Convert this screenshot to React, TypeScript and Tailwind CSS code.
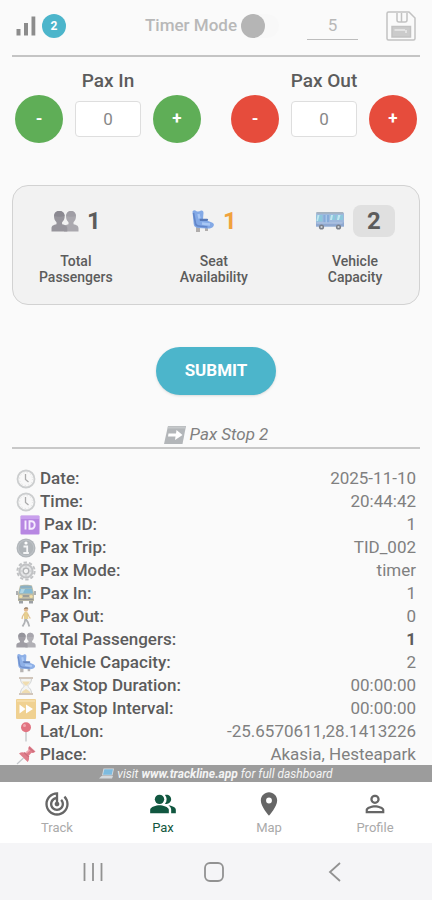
import { useState, type ReactNode } from 'react';
import { MdTrackChanges, MdPeopleAlt, MdLocationOn, MdPersonOutline } from 'react-icons/md';

interface IconProps {
  className?: string;
}

interface DetailRow {
  icon: (props: IconProps) => ReactNode;
  label: string;
  value: string;
  indent?: boolean;
  strong?: boolean;
}

function PeopleIcon({ className }: IconProps) {
  return (
    <svg viewBox="0 0 28 22" className={className}>
      <path d="M13 21.500v-4c0-2 2-2.700 4.500-3.200v-2c-1.500-1.500-2.500-3.500-2.500-6 0-3.500 2-5.300 5-5.300s5 1.800 5 5.300c0 2.500-1 4.500-2.500 6v2c3 .7 5 1.400 5 4.200v3z" fill="#aaa8ae" />
      <path d="M.5 21.500v-3c0-2.800 2-3.500 5-4.200v-2C4 10.800 3 8.800 3 6.300 3 2.800 5 1 8.300 1s5.400 1.800 5.400 5.300c0 2.500-1 4.500-2.600 6v2c3 .7 5.200 1.400 5.200 4.200v3z" fill="#97959c" />
      <path d="M3.200 6c.3-3 2-5 5.100-5s5 2 5.300 5c-2.500 1-8 1-10.400 0z" fill="#8b8991" />
      <path d="M15.200 6c.3-3 2-5 4.800-5s4.600 2 4.900 5c-2.300 1-7.500 1-9.700 0z" fill="#a09ea5" />
    </svg>
  );
}

function SeatIcon({ className }: IconProps) {
  return (
    <svg viewBox="0 0 24 24" className={className}>
      <path d="M5 18h4v5H5zM14 19h3v3h-3z" fill="#b0adac" />
      <path d="M1.500 2.500C2.500 1 4 1 5.500 2.200 7 3 8.500 2.500 10 1.500c1.700-.3 2.600.7 2.500 2.500L12 10l9 3.500c2 .8 2.500 2.500 1.300 4-1.500 1.700-3.500 2.300-6 2L7 19c-2.500-.3-4-1.500-4.300-4z" fill="#83a9e6" />
      <path d="M2.500 4l2 10.500c.3 1.500 1.300 2.300 3 2.500l9 1" fill="none" stroke="#6286c9" strokeWidth="1.600" />
      <path d="M8.500 9.800h7.500c1.500 0 1.500 2.200 0 2.200H9z" fill="#587ab8" />
      <path d="M7.500 5l1 4.500M11 14.500l8 1" stroke="#a9c8f5" strokeWidth="2.400" />
    </svg>
  );
}

function BusIcon({ className }: IconProps) {
  return (
    <svg viewBox="0 0 30 20" className={className}>
      <path d="M2 1.500h25.500c1 0 1.500.6 1.500 1.500v12.500H1V5c0-2 .3-3.500 1-3.500z" fill="#9db8dc" />
      <path d="M1.500 1h26.500l.7 1.800H1.200z" fill="#a5b2bf" />
      <path d="M1.500 4h6v6.500h-6zM15 4h5v5h-5zM21 4h7v5h-7z" fill="#8cc8dc" />
      <path d="M2.500 4h2l-1.500 6H1.500zM16 4h2l-1 5h-2zM23 4h2.500L24 9h-2z" fill="#c2e6f0" />
      <path d="M8.500 4h5.500v11H8.500z" fill="#86abd9" />
      <path d="M11.200 4v11" stroke="#b9d2ef" />
      <path d="M1 11.500h28v4H1z" fill="#8fa8d0" />
      <path d="M1.500 12h26" stroke="#bccde8" />
      <circle cx="6.500" cy="16" r="2.600" fill="#7b8089" />
      <circle cx="23.500" cy="16" r="2.600" fill="#7b8089" />
      <circle cx="6.500" cy="16" r="1.100" fill="#d0d3d8" />
      <circle cx="23.500" cy="16" r="1.100" fill="#d0d3d8" />
    </svg>
  );
}

function ClockIcon({ className }: IconProps) {
  return (
    <svg viewBox="0 0 20 20" className={className}>
      <circle cx="10" cy="10" r="8.500" fill="#f8f8f8" stroke="#c8cacb" strokeWidth="1.800" />
      <circle cx="10" cy="10" r="6.500" fill="none" stroke="#dedede" strokeDasharray="1 2.400" />
      <path d="M9.500 5v5.500l3 2.500" fill="none" stroke="#a3a3a3" strokeWidth="1.300" />
    </svg>
  );
}

function IdIcon({ className }: IconProps) {
  return (
    <svg viewBox="0 0 20 20" className={className}>
      <rect x=".5" y=".5" width="19" height="19" rx="1" fill="#b07be0" />
      <path d="M1 1h18v3H1z" fill="#c497ec" />
      <path d="M5.500 5.500v9M9.500 6.200h1.800c4.500 0 4.500 7.600 0 7.600H9.500z" fill="none" stroke="#f5ebff" strokeWidth="1.900" />
    </svg>
  );
}

function InfoIcon({ className }: IconProps) {
  return (
    <svg viewBox="0 0 20 20" className={className}>
      <circle cx="10" cy="10" r="9.500" fill="#a9aeb3" />
      <circle cx="10" cy="10" r="7.800" fill="none" stroke="#b9bec3" />
      <circle cx="10" cy="5" r="1.600" fill="#fff" />
      <path d="M7.500 8.500h3.700v6.200M7.300 15h5.600" fill="none" stroke="#f4f5f6" strokeWidth="1.800" />
    </svg>
  );
}

function GearIcon({ className }: IconProps) {
  return (
    <svg viewBox="0 0 20 20" className={className}>
      <circle cx="10" cy="10" r="8.600" fill="none" stroke="#bbbdbf" strokeWidth="2" strokeDasharray="3.400 2" />
      <circle cx="10" cy="10" r="6.600" fill="#e2e3e4" stroke="#bbbdbf" strokeWidth="2" />
      <circle cx="10" cy="10" r="2.800" fill="#f4f4f4" stroke="#abadaf" strokeWidth="1.300" />
      <path d="M10 4v3M10 13v3M4 10h3M13 10h3" stroke="#c2c4c6" />
    </svg>
  );
}

function BusFrontIcon({ className }: IconProps) {
  return (
    <svg viewBox="0 0 20 20" className={className}>
      <path d="M3 16h4v3.500H3zM13 16h4v3.500h-4z" fill="#94989c" />
      <path d="M0 7h2v4H0zM18 7h2v4h-2z" fill="#a5a9ac" />
      <path d="M4 1.500C6 .5 14 .5 16 1.500L18 9v8H2V9z" fill="#bbb79e" />
      <path d="M4.500 2c2-.8 9-.8 11 0l.5 2H4z" fill="#7fa9bf" />
      <path d="M4 4.500h12l1 5H3z" fill="#79b4d0" />
      <path d="M5 5h4l-2 4H4z" fill="#a9d3e4" />
      <circle cx="4.800" cy="12.500" r="1.500" fill="#f3dc9b" />
      <circle cx="15.200" cy="12.500" r="1.500" fill="#f3dc9b" />
      <path d="M7 12h6M2.500 15.500h15" stroke="#888b8a" strokeWidth="1.300" />
    </svg>
  );
}

function WalkIcon({ className }: IconProps) {
  return (
    <svg viewBox="0 0 20 20" className={className}>
      <circle cx="10" cy="2.600" r="2.200" fill="#dfb184" />
      <path d="M8 2c0-2 4-2.500 4.300-.3z" fill="#8d7762" />
      <path d="M9.500 11.500l2.500 4 1.300 4M9.500 11.500L8.500 16l-2 3.500" fill="none" stroke="#a8abae" strokeWidth="1.800" />
      <path d="M8 5.500c1-1 3-1 3.800 0l.5 6.500H8z" fill="#e6cb83" />
      <path d="M8.300 6.500L6.500 9.500 6 12M11.500 6.500l1.500 3 1.300 2" fill="none" stroke="#dcb984" strokeWidth="1.300" />
    </svg>
  );
}

function HourglassIcon({ className }: IconProps) {
  return (
    <svg viewBox="0 0 20 20" className={className}>
      <path d="M4.500 2.500c0 4 1.500 5 4 7.500-2.500 2.500-4 3.500-4 7.500h11c0-4-1.500-5-4-7.500 2.500-2.500 4-3.500 4-7.500z" fill="#f3f4f3" stroke="#cdcfcf" />
      <path d="M6 5.500h8c-.8 2-2.500 3-4 4.500-1.500-1.500-3.200-2.500-4-4.500zM5.500 17c.5-2 2.500-2.500 4.500-4 2 1.500 4 2 4.500 4z" fill="#eed9a8" />
      <path d="M3 1h14v2H3zM3 17h14v2H3z" fill="#cdc1b5" />
    </svg>
  );
}

function ForwardIcon({ className }: IconProps) {
  return (
    <svg viewBox="0 0 20 20" className={className}>
      <rect width="20" height="20" rx="1" fill="#efcd86" />
      <path d="M1 1h18v2H1z" fill="#f5d99f" />
      <path d="M3.500 5.500l6 4.500-6 4.500zM10 5.500l7 4.500-7 4.500z" fill="#fff" />
    </svg>
  );
}

function RoundPinIcon({ className }: IconProps) {
  return (
    <svg viewBox="0 0 20 20" className={className}>
      <path d="M10 9v10.500" stroke="#c3c6c9" strokeWidth="1.500" />
      <circle cx="10" cy="5.200" r="5" fill="#df6574" />
      <circle cx="8.500" cy="3.500" r="1.500" fill="#f0a0a9" />
    </svg>
  );
}

function PushPinIcon({ className }: IconProps) {
  return (
    <svg viewBox="0 0 20 20" className={className}>
      <path d="M7.500 13L1 19" stroke="#c0c4c8" strokeWidth="1.300" />
      <path d="M3 8.500c2-1.500 4-1.500 6-.5l3.500-3c-.5-1.500 0-3 1-4l6 5.500c-1 1.200-2.500 1.700-4 1.200L12.500 11c1 2 .8 4-.8 6z" fill="#dd7180" />
      <path d="M8 7.500l5 4.500M13 2.500l5 4.500" stroke="#c9606f" strokeWidth="1.200" />
      <path d="M10 8l3.500-3" stroke="#f1a3ad" strokeWidth="1.500" />
    </svg>
  );
}

function ArrowBoxIcon({ className }: IconProps) {
  return (
    <svg viewBox="0 0 22 18" className={className}>
      <path d="M4 0h18l-3.500 18H0z" fill="#b3b6b9" />
      <path d="M4 .5h17.500l-.5 2H3.500z" fill="#c5c8ca" />
      <path d="M4.500 7.500h7.500l.5-3.500 6 5-7.500 5 .5-3.500H4z" fill="#fff" />
    </svg>
  );
}

function LaptopIcon({ className }: IconProps) {
  return (
    <svg viewBox="0 0 16 11" className={className}>
      <path d="M4.500.5h10.500l-1.500 7H3z" fill="#d5dce2" />
      <path d="M5.300 1.300h8.700l-1.200 5.500H4z" fill="#7dbbdf" />
      <path d="M2.500 8h11.500l-1 2.500H0z" fill="#d3d8dc" />
    </svg>
  );
}

function SignalIcon({ className }: IconProps) {
  return (
    <svg viewBox="0 0 20 20" className={className} fill="#8c8c8c">
      <path d="M.5 13h4v6.500h-4zM8 7h4v12.500H8zM15.500.5h3.800v19h-3.800z" />
    </svg>
  );
}

function FloppyIcon({ className }: IconProps) {
  return (
    <svg viewBox="0 0 30 30" className={className} fill="none" stroke="#c2c2c2" strokeWidth="1.500">
      <path d="M2.500 1h20.500l6 6v20.500c0 1-.5 1.500-1.500 1.500h-25C1.500 29 1 28.500 1 27.500v-25C1 1.500 1.500 1 2.500 1z" />
      <path d="M11 2v7c0 1.200.6 2 2 2h6c1.300 0 2-.8 2-2V2M15.500 2v8.500" />
      <path d="M6 15.500h18.500v10.500H6z" fill="#cbcbcb" />
      <path d="M8.500 19h10.500M20 19v3" stroke="#ececec" />
    </svg>
  );
}

const DETAILS: DetailRow[] = [
  { icon: ClockIcon, label: 'Date:', value: '2025-11-10' },
  { icon: ClockIcon, label: 'Time:', value: '20:44:42' },
  { icon: IdIcon, label: 'Pax ID:', value: '1', indent: true },
  { icon: InfoIcon, label: 'Pax Trip:', value: 'TID_002' },
  { icon: GearIcon, label: 'Pax Mode:', value: 'timer' },
  { icon: BusFrontIcon, label: 'Pax In:', value: '1' },
  { icon: WalkIcon, label: 'Pax Out:', value: '0' },
  { icon: PeopleIcon, label: 'Total Passengers:', value: '1', strong: true },
  { icon: SeatIcon, label: 'Vehicle Capacity:', value: '2' },
  { icon: HourglassIcon, label: 'Pax Stop Duration:', value: '00:00:00' },
  { icon: ForwardIcon, label: 'Pax Stop Interval:', value: '00:00:00' },
  { icon: RoundPinIcon, label: 'Lat/Lon:', value: '-25.6570611,28.1413226' },
  { icon: PushPinIcon, label: 'Place:', value: 'Akasia, Hesteapark' },
];

const TABS = [
  { name: 'Track', icon: MdTrackChanges },
  { name: 'Pax', icon: MdPeopleAlt },
  { name: 'Map', icon: MdLocationOn },
  { name: 'Profile', icon: MdPersonOutline },
];

interface CounterProps {
  id: string;
  label: string;
  color: string;
  value: number;
  onChange: (value: number) => void;
}

function Counter({ id, label, color, value, onChange }: CounterProps) {
  const button = `size-12 rounded-full text-[17px] font-bold text-white ${color}`;

  return (
    <div className="flex flex-col items-center">
      <label htmlFor={id} className="text-[19px] leading-6 font-medium text-[#5c5c5c]">
        {label}
      </label>
      <div className="mt-0.5 flex items-center gap-3">
        <button className={button} onClick={() => onChange(Math.max(0, value - 1))}>
          -
        </button>
        <input
          id={id}
          inputMode="numeric"
          value={value}
          onChange={(e) => onChange(Number(e.target.value) || 0)}
          className="h-9 w-[66px] rounded-[4px] border border-[#dedede] bg-white text-center text-[17px] text-[#888] outline-none"
        />
        <button className={button} onClick={() => onChange(value + 1)}>
          +
        </button>
      </div>
    </div>
  );
}

interface StatProps {
  icon: ReactNode;
  value: ReactNode;
  lines: [string, string];
}

function Stat({ icon, value, lines }: StatProps) {
  return (
    <div className="flex flex-col items-center">
      <div className="flex h-8 items-center gap-2 text-[24px] font-bold">
        {icon}
        {value}
      </div>
      <p className="mt-4 text-center text-[14px] leading-4 font-medium text-[#5c5c5c]">
        {lines[0]}
        <br />
        {lines[1]}
      </p>
    </div>
  );
}

export default function App() {
  const [paxIn, setPaxIn] = useState(0);
  const [paxOut, setPaxOut] = useState(0);
  const [timerMode, setTimerMode] = useState(false);
  const [interval, setInterval] = useState('5');
  const [tab, setTab] = useState('Pax');

  return (
    <div className="flex h-screen flex-col bg-[#fafafa] font-[Roboto,sans-serif]">
      <main className="min-h-0 flex-1 overflow-y-auto [scrollbar-width:none]">
        {/* Top bar */}
        <header className="mx-3 flex h-[57px] items-center gap-7 border-b-2 border-[#c4c4c4] px-1 pb-1">
          <div className="mr-auto flex items-center gap-1.5">
            <SignalIcon className="size-5" />
            <span className="flex size-6 items-center justify-center rounded-full bg-[#4cb5cb] text-[12px] font-bold text-white">
              2
            </span>
          </div>
          <label className="flex items-center gap-1 text-[17px] font-medium text-[#b8b8b8]">
            Timer Mode
            <input
              type="checkbox"
              role="switch"
              checked={timerMode}
              onChange={(e) => setTimerMode(e.target.checked)}
              className="h-6 w-[38px] appearance-none rounded-full bg-[#f8f8f8] before:block before:size-6 before:rounded-full before:bg-[#b5b5b5] checked:before:ml-3.5 checked:before:bg-[#4cb5cb]"
            />
          </label>
          <input
            aria-label="Timer interval"
            value={interval}
            onChange={(e) => setInterval(e.target.value)}
            className="h-7 w-[51px] border-b border-[#bdbdbd] bg-transparent text-center text-[17px] text-[#b8b8b8] outline-none"
          />
          <button aria-label="Save">
            <FloppyIcon className="size-[30px]" />
          </button>
        </header>

        {/* Counters */}
        <section className="grid grid-cols-2 pt-3">
          <Counter id="pax-in" label="Pax In" color="bg-[#5fae57]" value={paxIn} onChange={setPaxIn} />
          <Counter id="pax-out" label="Pax Out" color="bg-[#e64c3c]" value={paxOut} onChange={setPaxOut} />
        </section>

        {/* Summary */}
        <section className="mx-3 mt-[42px] flex justify-between rounded-2xl border border-[#d2d2d2] bg-[#f2f2f2] py-[19px] pr-6 pl-[26px]">
          <Stat
            icon={<PeopleIcon className="h-[22px] w-7" />}
            value={<span className="text-[#5c5c5c]">1</span>}
            lines={['Total', 'Passengers']}
          />
          <Stat
            icon={<SeatIcon className="size-6" />}
            value={<span className="text-[#f0a23c]">1</span>}
            lines={['Seat', 'Availability']}
          />
          <Stat
            icon={<BusIcon className="h-5 w-[30px]" />}
            value={<span className="w-[42px] rounded-lg bg-[#e0e0e0] text-center leading-8 text-[#5c5c5c]">2</span>}
            lines={['Vehicle', 'Capacity']}
          />
        </section>

        <div className="mt-[42px] flex justify-center">
          <button className="h-12 rounded-full bg-[#4cb5cb] px-[29px] text-[17px] font-bold text-white shadow-sm">
            SUBMIT
          </button>
        </div>

        {/* Last stop */}
        <h2 className="mx-3 mt-7 flex h-[26px] items-center justify-center gap-1 border-b-2 border-[#c8c8c8] text-[17px] text-[#808080] italic">
          <ArrowBoxIcon className="h-[18px] w-[22px]" />
          Pax Stop 2
        </h2>

        <dl className="mt-[18px] px-4 text-[17px] leading-[23px] text-[#808080]">
          {DETAILS.map(({ icon: Icon, label, value, indent, strong }) => (
            <div key={label} className="flex justify-between">
              <dt className={`flex items-center gap-1 font-medium text-[#5c5c5c] ${indent ? 'pl-1' : ''}`}>
                <Icon className="size-5 opacity-90" />
                {label}
              </dt>
              <dd className={strong ? 'font-bold text-[#5c5c5c]' : ''}>{value}</dd>
            </div>
          ))}
        </dl>
      </main>

      <a
        href="#dashboard"
        className="flex h-[17px] items-center justify-center gap-0.5 bg-[#9c9c9c] text-[12px] text-[#f4f4f4] italic"
      >
        <LaptopIcon className="h-[11px] w-4" />
        <span>
          visit <b>www.trackline.app</b> for full dashboard
        </span>
      </a>

      <nav className="grid h-[61px] grid-cols-4 bg-white px-1">
        {TABS.map(({ name, icon: Icon }) => (
          <button
            key={name}
            onClick={() => setTab(name)}
            className={`flex flex-col items-center pt-2 text-[13px] leading-5 ${
              tab === name ? 'text-[#115740]' : 'text-[#aaa]'
            }`}
          >
            <Icon className={`size-7 ${tab === name ? 'text-[#115740]' : 'text-[#666]'}`} />
            {name}
          </button>
        ))}
      </nav>

      {/* System buttons */}
      <div className="flex h-[57px] items-center justify-around bg-[#f5f5f7] px-8 pr-9">
        <button aria-label="Recent apps">
          <svg viewBox="0 0 20 20" className="size-5" stroke="#929292" strokeWidth="1.800">
            <path d="M1.500 1v18M10 1v18M18.500 1v18" />
          </svg>
        </button>
        <button aria-label="Home">
          <svg viewBox="0 0 20 20" className="size-5" fill="none" stroke="#929292" strokeWidth="1.800">
            <rect x="1" y="1" width="18" height="18" rx="5" />
          </svg>
        </button>
        <button aria-label="Back">
          <svg viewBox="0 0 20 20" className="size-5" fill="none" stroke="#929292" strokeWidth="1.800">
            <path d="M15 1L5 10l10 9" />
          </svg>
        </button>
      </div>
    </div>
  );
}
